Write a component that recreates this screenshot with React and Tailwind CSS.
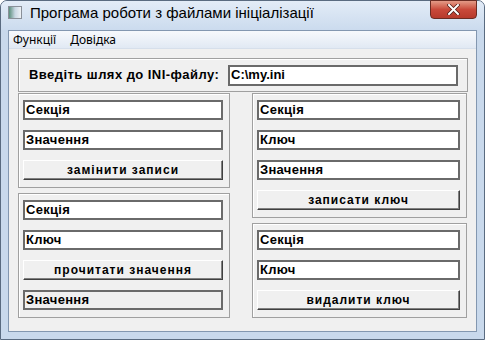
const ui = { fontFamily: '"Liberation Sans", Arial, sans-serif' }
const sys = { fontFamily: '"Noto Sans", "Open Sans", sans-serif' }

function Field({ value, readOnly = false }) {
  return (
    <div
      className={`h-[20px] w-full border-2 border-[#6a6a6a] flex items-center pl-[1px] text-[13px] font-bold text-black tracking-[0.3px] ${
        readOnly ? 'bg-[#f0f0f0]' : 'bg-white'
      }`}
    >
      {value}
    </div>
  )
}

function Btn({ label }) {
  return (
    <div className="h-[20px] w-full bg-[#f0f0f0] border border-t-white border-l-white border-r-[#404040] border-b-[#404040] shadow-[inset_-1px_-1px_0_#808080] flex items-center justify-center text-[12px] font-bold tracking-[1px] text-black">
      {label}
    </div>
  )
}

function Panel({ h, children }) {
  return (
    <div
      className={`border border-[#a0a0a0] shadow-[inset_1px_1px_0_#ffffff] pl-[4px] pr-[6px] pt-[6px] flex flex-col gap-[10px] ${h}`}
    >
      {children}
    </div>
  )
}

export default function App() {
  return (
    <div className="w-[485px] h-[340px] bg-[#c9d9ec] rounded-t-[7px] border border-[#5a6b80] flex flex-col" style={ui}>
      {/* title bar */}
      <div className="h-[29px] flex items-start relative bg-gradient-to-b from-[#e3ecf7] to-[#cbdbee] rounded-t-[6px]">
        <div className="shrink-0 mt-[5px] ml-[7px] w-[14px] h-[13px] border border-[#8a9099] bg-gradient-to-r from-[#5b8f7e] via-[#c9d7e3] to-[#eef2f6]" />
        <span className="ml-[8px] mt-[3px] text-[15px] leading-[18px] whitespace-nowrap text-black" style={ui}>
          Програма роботи з файлами ініціалізації
        </span>
        <div className="absolute right-[7px] top-[-1px] w-[47px] h-[19px] rounded-b-[4px] border border-[#6b2c23] bg-gradient-to-b from-[#e39a87] via-[#c9493a] to-[#b73a2c] flex items-center justify-center">
          <svg width="13" height="11" viewBox="0 0 13 11">
            <path d="M2 1 L11 10 M11 1 L2 10" stroke="#4a1a14" strokeWidth="3.4" strokeLinecap="square" />
            <path d="M2 1 L11 10 M11 1 L2 10" stroke="#ffffff" strokeWidth="2" strokeLinecap="square" />
          </svg>
        </div>
      </div>

      {/* client area */}
      <div className="mx-[7px] h-[302px] border border-[#8397b0] bg-[#f0f0f0] flex flex-col">
        {/* menu */}
        <div className="h-[18px] bg-gradient-to-b from-[#f7f9fc] to-[#e1e9f4] border-b border-[#d6dfeb] flex items-center text-[12px] text-black gap-[14px] pl-[4px]" style={sys}>
          <span>Функції</span>
          <span>Довідка</span>
        </div>

        <div className="pl-[9px] pt-[9px] flex flex-col gap-[1px]">
          {/* path panel */}
          <div className="w-[450px] h-[34px] border border-[#a0a0a0] shadow-[inset_1px_1px_0_#ffffff] flex items-center pl-[10px] pr-[9px]">
            <span className="text-[13px] font-bold tracking-[0.45px] text-black">Введіть шлях до INI-файлу:</span>
            <div className="ml-auto w-[230px] h-[21px] border-2 border-[#6a6a6a] bg-white flex items-center pl-[1px] text-[13px] font-bold">
              C:\my.ini
            </div>
          </div>

          <div className="flex gap-[22px]">
            {/* left column */}
            <div className="w-[212px] flex flex-col gap-[5px]">
              <Panel h="h-[95px]">
                <Field value="Секція" />
                <Field value="Значення" />
                <Btn label="замінити записи" />
              </Panel>
              <Panel h="h-[125px]">
                <Field value="Секція" />
                <Field value="Ключ" />
                <Btn label="прочитати значення" />
                <Field value="Значення" readOnly />
              </Panel>
            </div>

            {/* right column */}
            <div className="w-[215px] flex flex-col gap-[5px]">
              <Panel h="h-[125px]">
                <Field value="Секція" />
                <Field value="Ключ" />
                <Field value="Значення" />
                <Btn label="записати ключ" />
              </Panel>
              <Panel h="h-[95px]">
                <Field value="Секція" />
                <Field value="Ключ" />
                <Btn label="видалити ключ" />
              </Panel>
            </div>
          </div>
        </div>
      </div>
    </div>
  )
}
